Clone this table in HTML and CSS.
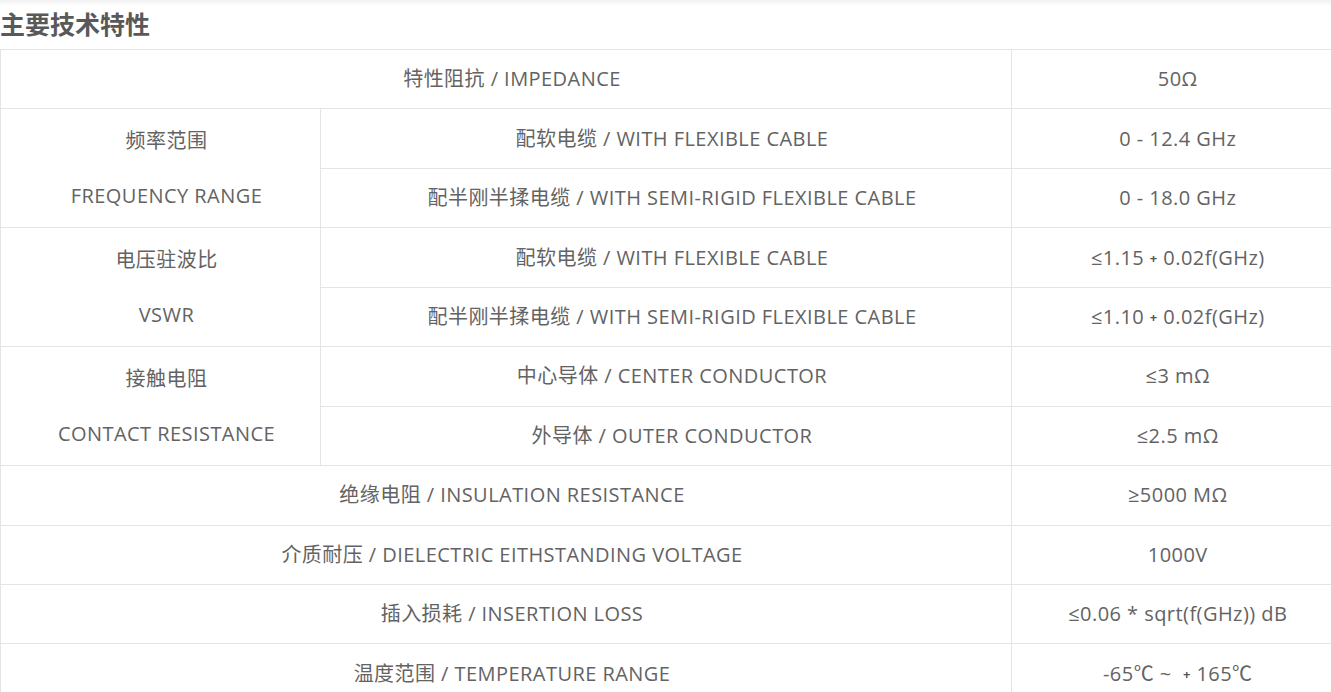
FILE: index.html
```html
<!DOCTYPE html>
<html lang="zh-CN">
<head>
<meta charset="utf-8">
<title>主要技术特性</title>
<link rel="stylesheet" href="styles.css">
</head>
<body>
<div class="topshadow"></div>
<h2 class="title">主要技术特性</h2>
<table class="spec">
  <colgroup>
    <col class="c1">
    <col class="c2">
    <col class="c3">
  </colgroup>
  <tr>
    <td colspan="2">特性阻抗 / IMPEDANCE</td>
    <td class="val">50Ω</td>
  </tr>
  <tr>
    <td rowspan="2" class="group"><p>频率范围</p><p>FREQUENCY RANGE</p></td>
    <td>配软电缆 / WITH FLEXIBLE CABLE</td>
    <td class="val">0 - 12.4 GHz</td>
  </tr>
  <tr>
    <td>配半刚半揉电缆 / WITH SEMI-RIGID FLEXIBLE CABLE</td>
    <td class="val">0 - 18.0 GHz</td>
  </tr>
  <tr>
    <td rowspan="2" class="group"><p>电压驻波比</p><p>VSWR</p></td>
    <td>配软电缆 / WITH FLEXIBLE CABLE</td>
    <td class="val">≤1.15 <span class="plus">+</span> 0.02f(GHz)</td>
  </tr>
  <tr>
    <td>配半刚半揉电缆 / WITH SEMI-RIGID FLEXIBLE CABLE</td>
    <td class="val">≤1.10 <span class="plus">+</span> 0.02f(GHz)</td>
  </tr>
  <tr>
    <td rowspan="2" class="group"><p>接触电阻</p><p>CONTACT RESISTANCE</p></td>
    <td>中心导体 / CENTER CONDUCTOR</td>
    <td class="val">≤3 mΩ</td>
  </tr>
  <tr>
    <td>外导体 / OUTER CONDUCTOR</td>
    <td class="val">≤2.5 mΩ</td>
  </tr>
  <tr>
    <td colspan="2">绝缘电阻 / INSULATION RESISTANCE</td>
    <td class="val">≥5000 MΩ</td>
  </tr>
  <tr>
    <td colspan="2">介质耐压 / DIELECTRIC EITHSTANDING VOLTAGE</td>
    <td class="val">1000V</td>
  </tr>
  <tr>
    <td colspan="2">插入损耗 / INSERTION LOSS</td>
    <td class="val">≤0.06 * sqrt(f(GHz)) dB</td>
  </tr>
  <tr>
    <td colspan="2">温度范围 / TEMPERATURE RANGE</td>
    <td class="val">-65℃ ~ &nbsp;<span class="plus">+</span> 165℃</td>
  </tr>
</table>
</body>
</html>
```
FILE: styles.css
```css
html, body {
  margin: 0;
  padding: 0;
  background: #fff;
  overflow: hidden;
}
body {
  font-family: "Open Sans", "Noto Sans CJK SC", sans-serif;
  color: #636363;
}
.topshadow {
  height: 6px;
  background: linear-gradient(#f0f0f0, #fff);
}
.title {
  margin: 0;
  padding: 0;
  height: 43px;
  font-size: 25px;
  line-height: 34px;
  font-weight: bold;
  color: #595959;
  font-family: "Noto Sans CJK SC", sans-serif;
}
.spec {
  border-collapse: collapse;
  width: 1331px;
  table-layout: fixed;
}
.spec col.c1 { width: 320px; }
.spec col.c2 { width: 691px; }
.spec col.c3 { width: 320px; }
.spec td {
  border: 1px solid #e4e4e4;
  height: 58.45px;
  padding: 0 0 0 12px;
  text-align: center;
  vertical-align: middle;
  font-size: 20px;
  line-height: 24px;
  letter-spacing: 0.45px;
}
.spec td.val {
  border-right: none;
}
.spec td.group p {
  margin: 0;
  line-height: 24px;
}
.spec td.group p + p {
  margin-top: 31px;
}
.plus {
  font-size: 13px;
  font-weight: bold;
  vertical-align: 2px;
  color: #555;
}
```
